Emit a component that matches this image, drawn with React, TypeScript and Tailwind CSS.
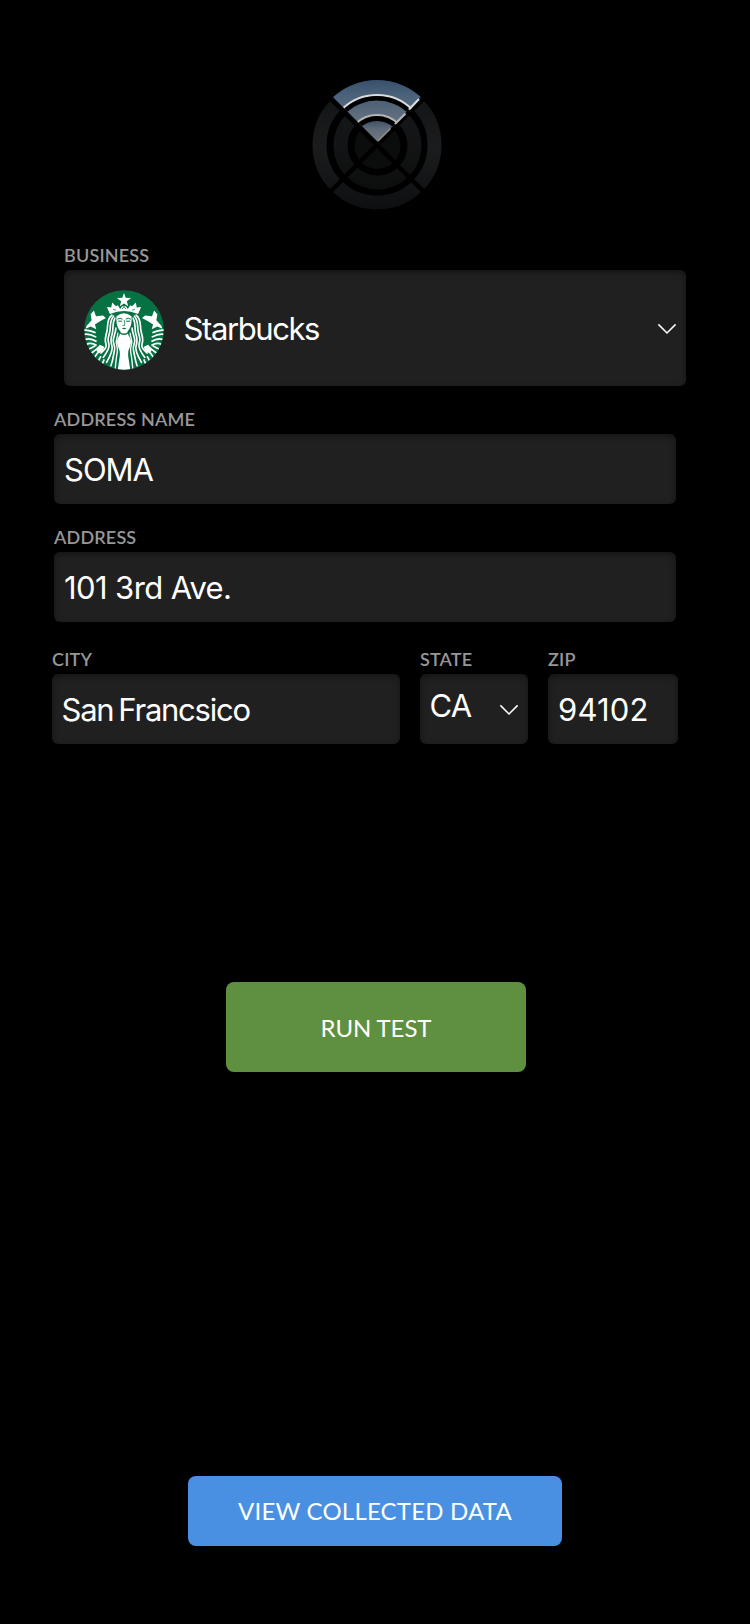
import type { ReactNode } from "react";

const field =
  "flex items-center rounded-[6px] bg-[#202020] shadow-[inset_0_2px_6px_rgba(0,0,0,0.4)] font-['Inter','Liberation_Sans',sans-serif] text-[31px] leading-none text-white whitespace-nowrap";

function Label({ children }: { children: ReactNode }) {
  return (
    <div className="h-[27px] font-['Lato','Liberation_Sans',sans-serif] text-[18px] leading-6 font-semibold tracking-[0.17px] text-[#979797] whitespace-nowrap">
      {children}
    </div>
  );
}

function Chevron() {
  return (
    <svg
      className="mt-0.5"
      width="20"
      height="12"
      viewBox="0 0 20 12"
      fill="none"
      stroke="#fff"
      strokeWidth="1.5"
    >
      <path d="M1.4 1.4 10 10l8.600-8.600" />
    </svg>
  );
}

function RadarLogo() {
  return (
    <svg width="130" height="130" viewBox="-65 -65 130 130">
      <defs>
        <linearGradient id="dark" gradientUnits="userSpaceOnUse" x1="0" y1="-50" x2="0" y2="65">
          <stop offset="0" stopColor="#131415" />
          <stop offset="0.45" stopColor="#1a1c1e" />
          <stop offset="1" stopColor="#0e0f10" />
        </linearGradient>
        <linearGradient id="darkMid" gradientUnits="userSpaceOnUse" x1="0" y1="-45" x2="0" y2="45">
          <stop offset="0" stopColor="#151718" />
          <stop offset="0.5" stopColor="#131415" />
          <stop offset="1" stopColor="#0c0d0d" />
        </linearGradient>
        <linearGradient id="blueOuter" gradientUnits="userSpaceOnUse" x1="0" y1="-65" x2="0" y2="-34">
          <stop offset="0" stopColor="#38506b" />
          <stop offset="0.5" stopColor="#4b627a" />
          <stop offset="1" stopColor="#5a6d81" />
        </linearGradient>
        <linearGradient id="blueMid" gradientUnits="userSpaceOnUse" x1="0" y1="-45" x2="0" y2="-20">
          <stop offset="0" stopColor="#4c5f75" />
          <stop offset="1" stopColor="#687583" />
        </linearGradient>
        <linearGradient id="blueInner" gradientUnits="userSpaceOnUse" x1="0" y1="-25" x2="0" y2="-3">
          <stop offset="0" stopColor="#3e4d60" />
          <stop offset="0.4" stopColor="#5e6a79" />
          <stop offset="1" stopColor="#737a83" />
        </linearGradient>
        <clipPath id="wedge">
          <path d="M0.500-3.500-71-75H70Z" />
        </clipPath>
      </defs>
      <circle r="57.500" fill="none" stroke="url(#dark)" strokeWidth="14" />
      <circle cx="0.500" cy="0.500" r="37" fill="none" stroke="url(#darkMid)" strokeWidth="14" />
      <circle cx="0.500" cy="1" r="23" fill="#0b0c0c" />
      <path d="M-49-49 50 50M50-50-50 50" stroke="#000" strokeWidth="4.500" />
      <g clipPath="url(#wedge)">
        <circle r="65" fill="url(#blueOuter)" />
        <circle r="50" fill="none" stroke="#dddcda" strokeWidth="2.200" />
        <circle r="49" fill="#000" />
        <circle r="44.500" fill="url(#blueMid)" />
        <circle r="30" fill="none" stroke="#b9b6b2" strokeWidth="2" />
        <circle r="29" fill="#000" />
        <circle r="24" fill="url(#blueInner)" />
      </g>
      <path d="M32-35.500 42-46" stroke="#dddcda" strokeWidth="2.200" />
      <path d="M18-21 28.500-31.500" stroke="#b9b8b6" strokeWidth="2" />
      <path d="M1-4 13.500-16.500" stroke="#928d89" strokeWidth="1.600" />
    </svg>
  );
}

function Waves() {
  return (
    <g>
      <g fill="none" stroke="#fff" strokeWidth="5" strokeLinecap="round">
        <path d="M114 105C97 117 103 137 99 154S91 177 96 191 88 210 81 219" />
        <path d="M119 108C105 124 112 141 107 158S101 179 105 192 98 218 88 232" />
        <path d="M123 114C113 132 120 146 115 161S109 183 114 196 109 228 98 247" />
        <path d="M126 144C126 158 118 171 118 181S125 198 122 210 118 239 111 257" />
      </g>
      <path
        d="M132 158C132 170 126 179 127 187S133 204 130 218 126 247 124 266"
        fill="none"
        stroke="#fff"
        strokeWidth="4"
      />
      <g fill="none" stroke="#fff" strokeWidth="5">
        <path d="M29 150Q43 148 65 158" />
        <path d="M29 163Q45 159 67 171" />
        <path d="M33 178Q49 172 68 184" />
        <path d="M37 193Q51 185 68 196" />
        <path d="M43 208 64 197M50 221 67 208M60 234 72 217M72 245 81 228M84 254 91 238" />
      </g>
      <path
        d="M38 137 53 120 50 102 60 91 66 108 87 106 96 113 77 124 63 133 67 147 50 139 35 146Z"
        fill="#fff"
      />
      <path d="M65 207 78 194 91 200 87 213 73 220Z" fill="#fff" />
    </g>
  );
}

function SirenLogo() {
  return (
    <svg width="80" height="80" viewBox="30 29 241 241" className="mt-1 shrink-0">
      <defs>
        <clipPath id="disc">
          <circle cx="150.500" cy="149.500" r="119.500" />
        </clipPath>
      </defs>
      <circle cx="150.500" cy="149.500" r="120" fill="#067244" />
      <g clipPath="url(#disc)">
        <Waves />
        <g transform="translate(301 0) scale(-1 1)">
          <Waves />
        </g>
        <path
          d="M128 108Q150 90 173 108 176 138 161 154L164 165Q172 175 172 184 171 199 164 211 162 222 164 234L170 274H131L137 234Q139 222 137 211 130 199 129 184 129 175 137 165L140 154Q125 138 128 108Z"
          fill="#fff"
        />
        <path
          d="M131 117Q139 111 146 117M156 117Q164 111 171 117M133 123H145M157 123H169"
          fill="none"
          stroke="#067244"
          strokeWidth="3"
        />
        <path d="M151 119Q154 129 152 136H146" fill="none" stroke="#4b9873" strokeWidth="3" />
        <path d="M144 145Q151 141 158 145 151 150 144 145Z" fill="#067244" />
        <path d="M136 156Q151 169 165 156" fill="none" stroke="#067244" strokeWidth="4" />
        <path
          d="M150.500 38 155.500 52 172 53 159 63 163 78 150.500 70 138 78 142 63 129 53 145.500 52Z"
          fill="#fff"
        />
        <path
          d="M99 80 112 82 115 67 126 78 132 75 139 86 145 78H156L162 86 169 75 175 78 186 67 189 82 202 80 193 101Q150 83 108 101Z"
          fill="#fff"
        />
        <path
          d="M118 87 126 90M183 87 175 90M145 86 150.500 79 156 86"
          stroke="#067244"
          strokeWidth="2.500"
          fill="none"
        />
      </g>
    </svg>
  );
}

export default function App() {
  return (
    <main className="flex h-[1624px] w-[750px] flex-col bg-black pt-20">
      <div className="ml-[312px] h-[130px]">
        <RadarLogo />
      </div>

      <section className="mt-[33px] ml-16 w-[622px]">
        <Label>BUSINESS</Label>
        <div className={`${field} h-[116px] pr-[9px] pl-5`}>
          <SirenLogo />
          <span className="ml-[19.5px] grow tracking-[-1.4px]">Starbucks</span>
          <Chevron />
        </div>
      </section>

      <section className="mt-[21px] ml-[54px] w-[622px]">
        <Label>ADDRESS NAME</Label>
        <div className={`${field} h-[70px] px-2.5 tracking-[-1px]`}>SOMA</div>
      </section>

      <section className="mt-[21px] ml-[54px] w-[622px]">
        <Label>ADDRESS</Label>
        <div className={`${field} h-[70px] px-2.5 tracking-[-0.6px]`}>101 3rd Ave.</div>
      </section>

      <section className="mt-[25px] ml-[52px] flex gap-5">
        <div className="w-[348px]">
          <Label>CITY</Label>
          <div className={`${field} h-[70px] px-[9.5px] tracking-[-1.25px] [word-spacing:-2.5px]`}>
            San Francsico
          </div>
        </div>
        <div className="w-[108px]">
          <Label>STATE</Label>
          <div className={`${field} h-[70px] justify-between pr-[9px] pl-[9.5px]`}>
            <span className="pb-2 tracking-[-0.8px]">CA</span>
            <Chevron />
          </div>
        </div>
        <div className="w-[130px]">
          <Label>ZIP</Label>
          <div className={`${field} h-[70px] px-2.5 tracking-[0.2px]`}>94102</div>
        </div>
      </section>

      <button className="mt-[238px] ml-[226px] h-[90px] w-[300px] rounded-lg bg-[#5f9040] pt-0.5 font-['Lato','Liberation_Sans',sans-serif] text-[24px] tracking-[-0.1px] text-white">
        RUN TEST
      </button>

      <button className="mt-[404px] ml-[188px] h-[70px] w-[374px] rounded-lg bg-[#4a90e2] font-['Lato','Liberation_Sans',sans-serif] text-[24px] tracking-[0.2px] text-white">
        VIEW COLLECTED DATA
      </button>
    </main>
  );
}
